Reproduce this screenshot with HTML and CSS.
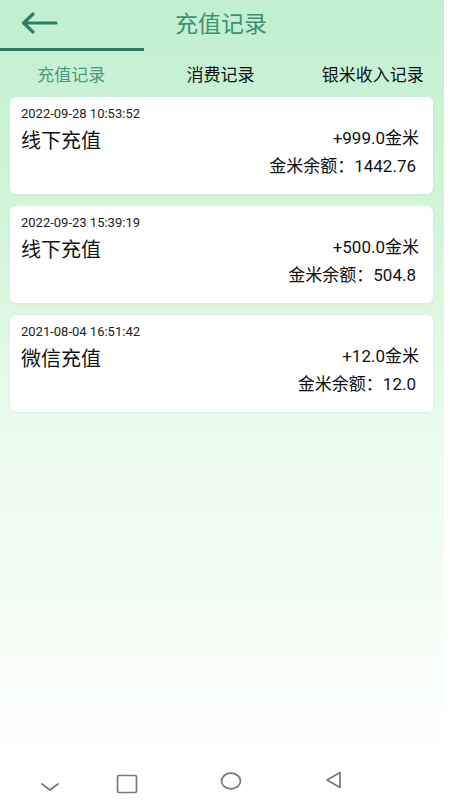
FILE: index.html
```html
<!DOCTYPE html>
<html lang="zh-CN">
<head>
    <meta charset="UTF-8">
    <meta name="viewport" content="width=device-width, initial-scale=1.0">
    <title>充值记录</title>
    <link rel="stylesheet" href="styles.css">
</head>
<body>

    <div class="screen">
        <!-- 顶部标题 -->
        <div class="header">
            <span class="back">
                <svg width="38" height="22" viewBox="0 0 38 22">
                    <path d="M36 11H4M13 2L3.5 11L13 20" fill="none" stroke="#2f7f60" stroke-width="3.2" stroke-linecap="round" stroke-linejoin="round"/>
                </svg>
            </span>
            <h1>充值记录</h1>
        </div>
        <div class="indicator"></div>

        <!-- 标签 -->
        <div class="tabs">
            <div class="tab active">充值记录</div>
            <div class="tab middle">消费记录</div>
            <div class="tab">银米收入记录</div>
        </div>

        <!-- 记录列表 -->
        <div class="list">
            <div class="card">
                <div class="date">2022-09-28 10:53:52</div>
                <div class="row">
                    <div class="title">线下充值</div>
                    <div class="amount">+999.0金米</div>
                </div>
                <div class="balance">金米余额：1442.76</div>
            </div>
            <div class="card">
                <div class="date">2022-09-23 15:39:19</div>
                <div class="row">
                    <div class="title">线下充值</div>
                    <div class="amount">+500.0金米</div>
                </div>
                <div class="balance">金米余额：504.8</div>
            </div>
            <div class="card">
                <div class="date">2021-08-04 16:51:42</div>
                <div class="row">
                    <div class="title">微信充值</div>
                    <div class="amount">+12.0金米</div>
                </div>
                <div class="balance">金米余额：12.0</div>
            </div>
        </div>

        <!-- 底部导航 -->
        <div class="navbar">
            <svg class="nav-down" width="20" height="12" viewBox="0 0 20 12">
                <path d="M2 3L10 9L18 3" fill="none" stroke="#7a7a7a" stroke-width="1.8" stroke-linecap="round" stroke-linejoin="round"/>
            </svg>
            <svg class="nav-square" width="22" height="20" viewBox="0 0 22 20">
                <rect x="1.5" y="1.5" width="19" height="17" rx="1.5" fill="none" stroke="#7a7a7a" stroke-width="1.7"/>
            </svg>
            <svg class="nav-circle" width="22" height="18" viewBox="0 0 22 18">
                <ellipse cx="11" cy="9" rx="9.5" ry="7.8" fill="none" stroke="#7a7a7a" stroke-width="1.7"/>
            </svg>
            <svg class="nav-back" width="18" height="18" viewBox="0 0 18 18">
                <path d="M15 1.5V16.5L2 9Z" fill="none" stroke="#7a7a7a" stroke-width="1.7" stroke-linejoin="round"/>
            </svg>
        </div>
    </div>

</body>
</html>
```

FILE: styles.css
```css
/* 基础 */
html, body {
    margin: 0;
    padding: 0;
}

body {
    background: #ffffff;
    font-family: Roboto, "Noto Sans CJK SC", sans-serif;
    color: #1a1a1a;
}

.screen {
    width: 444px;
    height: 800px;
    display: flex;
    flex-direction: column;
    background: linear-gradient(to bottom, #c1efd0 0%, #d4f5dd 30%, #e9fbec 52%, #f4fdf5 75%, #fdfffd 92%, #ffffff 100%);
}

/* 顶部标题 */
.header {
    height: 48px;
    position: relative;
    display: flex;
    align-items: center;
    justify-content: center;
}

.back {
    position: absolute;
    left: 20px;
    top: 12px;
    display: flex;
}

.header h1 {
    margin: 0;
    font-size: 23px;
    font-weight: 400;
    color: #3e9072;
    padding-right: 2px;
    margin-top: -5px;
}

.indicator {
    width: 144px;
    height: 3px;
    background: #2f7a5d;
}

/* 标签 */
.tabs {
    display: flex;
    height: 46px;
    align-items: center;
}

.tab {
    flex: 1;
    text-align: center;
    font-size: 17px;
    color: #111;
    padding-bottom: 2px;
}

.tab.active {
    color: #4b9a7a;
    padding-right: 7px;
}

.tab.middle {
    padding-right: 10px;
}

/* 列表 */
.list {
    display: flex;
    flex-direction: column;
    gap: 12px;
    padding: 0 11px 0 10px;
}

.card {
    background: #ffffff;
    border-radius: 6px;
    box-shadow: 0 1px 3px rgba(0, 0, 0, 0.05);
    padding: 8px 14px 17px 11px;
}

.date {
    font-size: 13px;
    line-height: 18px;
    color: #222;
}

.row {
    display: flex;
    justify-content: space-between;
    align-items: flex-start;
    margin-top: 4px;
}

.title {
    font-size: 20px;
    line-height: 28px;
    color: #111;
}

.amount {
    font-size: 17px;
    line-height: 22px;
    color: #111;
}

.balance {
    text-align: right;
    font-size: 17px;
    line-height: 22px;
    color: #111;
    padding-right: 3px;
}

/* 底部导航 */
.navbar {
    margin-top: auto;
    height: 56px;
    background: #ffffff;
    position: relative;
}

.navbar svg {
    position: absolute;
}

.nav-down { left: 40px; top: 37px; }
.nav-square { left: 116px; top: 30px; }
.nav-circle { left: 220px; top: 28px; }
.nav-back { left: 325px; top: 27px; }
```
